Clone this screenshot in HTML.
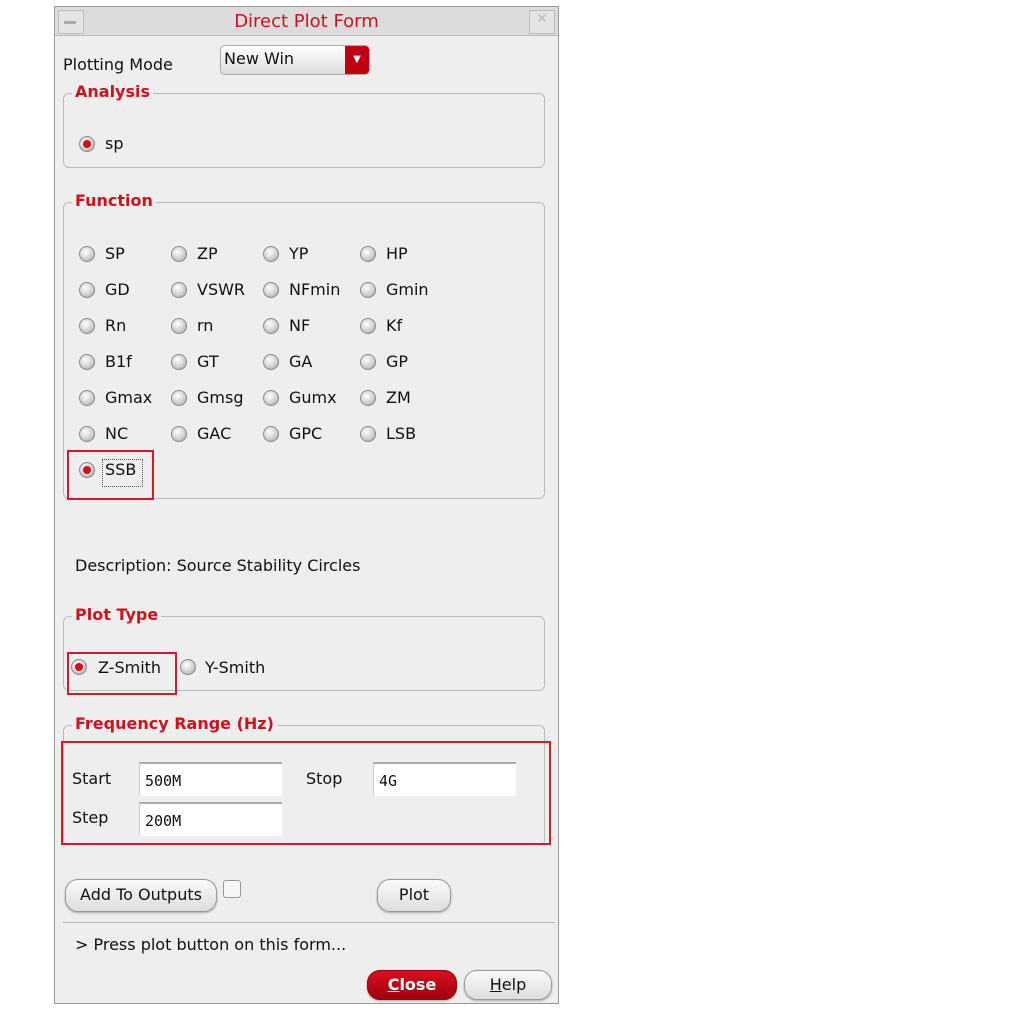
<!DOCTYPE html><html><head><style>
body{margin:0;width:1013px;height:1016px;background:#fff;position:relative;font-family:"DejaVu Sans",sans-serif;font-size:16px;color:#111;overflow:hidden}
.a{position:absolute;white-space:nowrap}
#win{position:absolute;left:54px;top:6px;width:503px;height:996px;background:#eeeeee;border:1px solid #999}
.fs{position:absolute;left:8px;width:480px;border:1px solid #bbb;border-radius:6px}
.lg{position:absolute;top:-12px;left:8px;background:#eee;padding:0 3px;color:#d0101a;font-weight:bold;font-size:16px}
.r{position:absolute;width:14px;height:14px;border-radius:50%;background:radial-gradient(circle at 40% 35%,#fff,#ccc 60%,#999);border:1px solid #888}
.r.on::after{content:"";position:absolute;left:3px;top:3px;width:8px;height:8px;border-radius:50%;background:#d0101a}
.red{position:absolute;border:2px solid #d8172a}
.tf{position:absolute;background:#fff;border-top:2px solid #aaa;border-left:1px solid #ccc;height:34px;font-family:"DejaVu Sans Mono",monospace;font-size:15px;line-height:34px;padding-left:5px;box-sizing:border-box}
.btn{position:absolute;border:1px solid #999;border-radius:13px;background:linear-gradient(#fafafa,#ddd);text-align:center;font-size:16px;line-height:30px;height:31px;box-shadow:0 1px 2px #aaa}
</style></head><body>
<div id="win">
<div class="a" style="left:0;top:0;width:503px;height:28px;background:#dcdcdc;border-bottom:1px solid #bbb"></div>
<div class="a" style="left:3px;top:3px;width:24px;height:22px;border:1px solid #bbb;background:#e4e4e4"></div>
<div class="a" style="left:9px;top:14px;width:12px;height:3px;background:#aaa"></div>
<div class="a" style="left:474px;top:3px;width:24px;height:22px;border:1px solid #bbb;background:#e4e4e4;color:#bbb;font-size:14px;text-align:center">✕</div>
<div class="a" style="left:0;width:503px;top:4px;text-align:center;color:#d0101a;font-size:18px">Direct Plot Form</div>
<div class="a" style="left:8px;top:48px">Plotting Mode</div>
<div class="a" style="left:165px;top:38px;width:148px;height:28px;border:1px solid #aaa;border-radius:5px;background:linear-gradient(#fff,#ddd);overflow:hidden"><span style="position:absolute;left:3px;top:3px">New Win</span><div style="position:absolute;right:0;top:0;width:24px;height:28px;background:#c00010;color:#fff;font-size:10px;text-align:center;line-height:28px">▼</div></div>
<div class="fs" style="top:86px;height:73px"><div class="lg">Analysis</div></div>
<div class="r on" style="left:24px;top:129px"></div><div class="a" style="left:50px;top:127px">sp</div>
<div class="fs" style="top:195px;height:295px"><div class="lg">Function</div></div>
<div class="red" style="left:12px;top:443px;width:83px;height:46px"></div>
<div class="a" style="left:47px;top:452px;width:39px;height:26px;border:1px dotted #555"></div>
<div class="a" style="left:12px;top:549px;padding-left:8px">Description: Source Stability Circles</div>
<div class="fs" style="top:609px;height:73px"><div class="lg">Plot Type</div></div>
<div class="red" style="left:12px;top:645px;width:106px;height:39px"></div>
<div class="r on" style="left:16px;top:652px"></div><div class="a" style="left:43px;top:651px">Z-Smith</div>
<div class="r" style="left:125px;top:652px"></div><div class="a" style="left:150px;top:651px">Y-Smith</div>
<div class="fs" style="top:718px;height:120px;border-bottom:none"><div class="lg">Frequency Range (Hz)</div></div>
<div class="red" style="left:6px;top:734px;width:486px;height:100px"></div>
<div class="a" style="left:17px;top:762px">Start</div>
<div class="tf" style="left:84px;top:755px;width:143px">500M</div>
<div class="a" style="left:251px;top:762px">Stop</div>
<div class="tf" style="left:318px;top:755px;width:143px">4G</div>
<div class="a" style="left:17px;top:801px">Step</div>
<div class="tf" style="left:84px;top:795px;width:143px">200M</div>
<div class="btn" style="left:10px;top:872px;width:150px">Add To Outputs</div>
<div class="a" style="left:168px;top:873px;width:16px;height:16px;border:1px solid #999;border-radius:3px;background:#f6f6f6"></div>
<div class="btn" style="left:322px;top:872px;width:72px">Plot</div>
<div class="a" style="left:8px;top:915px;width:492px;height:1px;background:#bbb"></div>
<div class="a" style="left:20px;top:928px">&gt; Press plot button on this form...</div>
<div class="btn" style="left:312px;top:963px;width:88px;height:28px;line-height:27px;background:linear-gradient(#d81020,#a00010);color:#fff;font-weight:bold;border-color:#900"><u>C</u>lose</div>
<div class="btn" style="left:409px;top:963px;width:86px;height:28px;line-height:27px"><u>H</u>elp</div>
</div>
<div id="rad"></div>
<script>
var L=[["SP","ZP","YP","HP"],["GD","VSWR","NFmin","Gmin"],["Rn","rn","NF","Kf"],["B1f","GT","GA","GP"],["Gmax","Gmsg","Gumx","ZM"],["NC","GAC","GPC","LSB"],["SSB"]];
var X=[79,171,263,360],h="";
L.forEach(function(r,i){r.forEach(function(t,j){var y=246+i*36;h+='<div class="r'+(t=="SSB"?' on':'')+'" style="left:'+X[j]+'px;top:'+y+'px"></div><div class="a" style="left:'+(X[j]+26)+'px;top:'+(y-2)+'px">'+t+'</div>';});});
document.getElementById("rad").innerHTML=h;
</script>
</body></html>
